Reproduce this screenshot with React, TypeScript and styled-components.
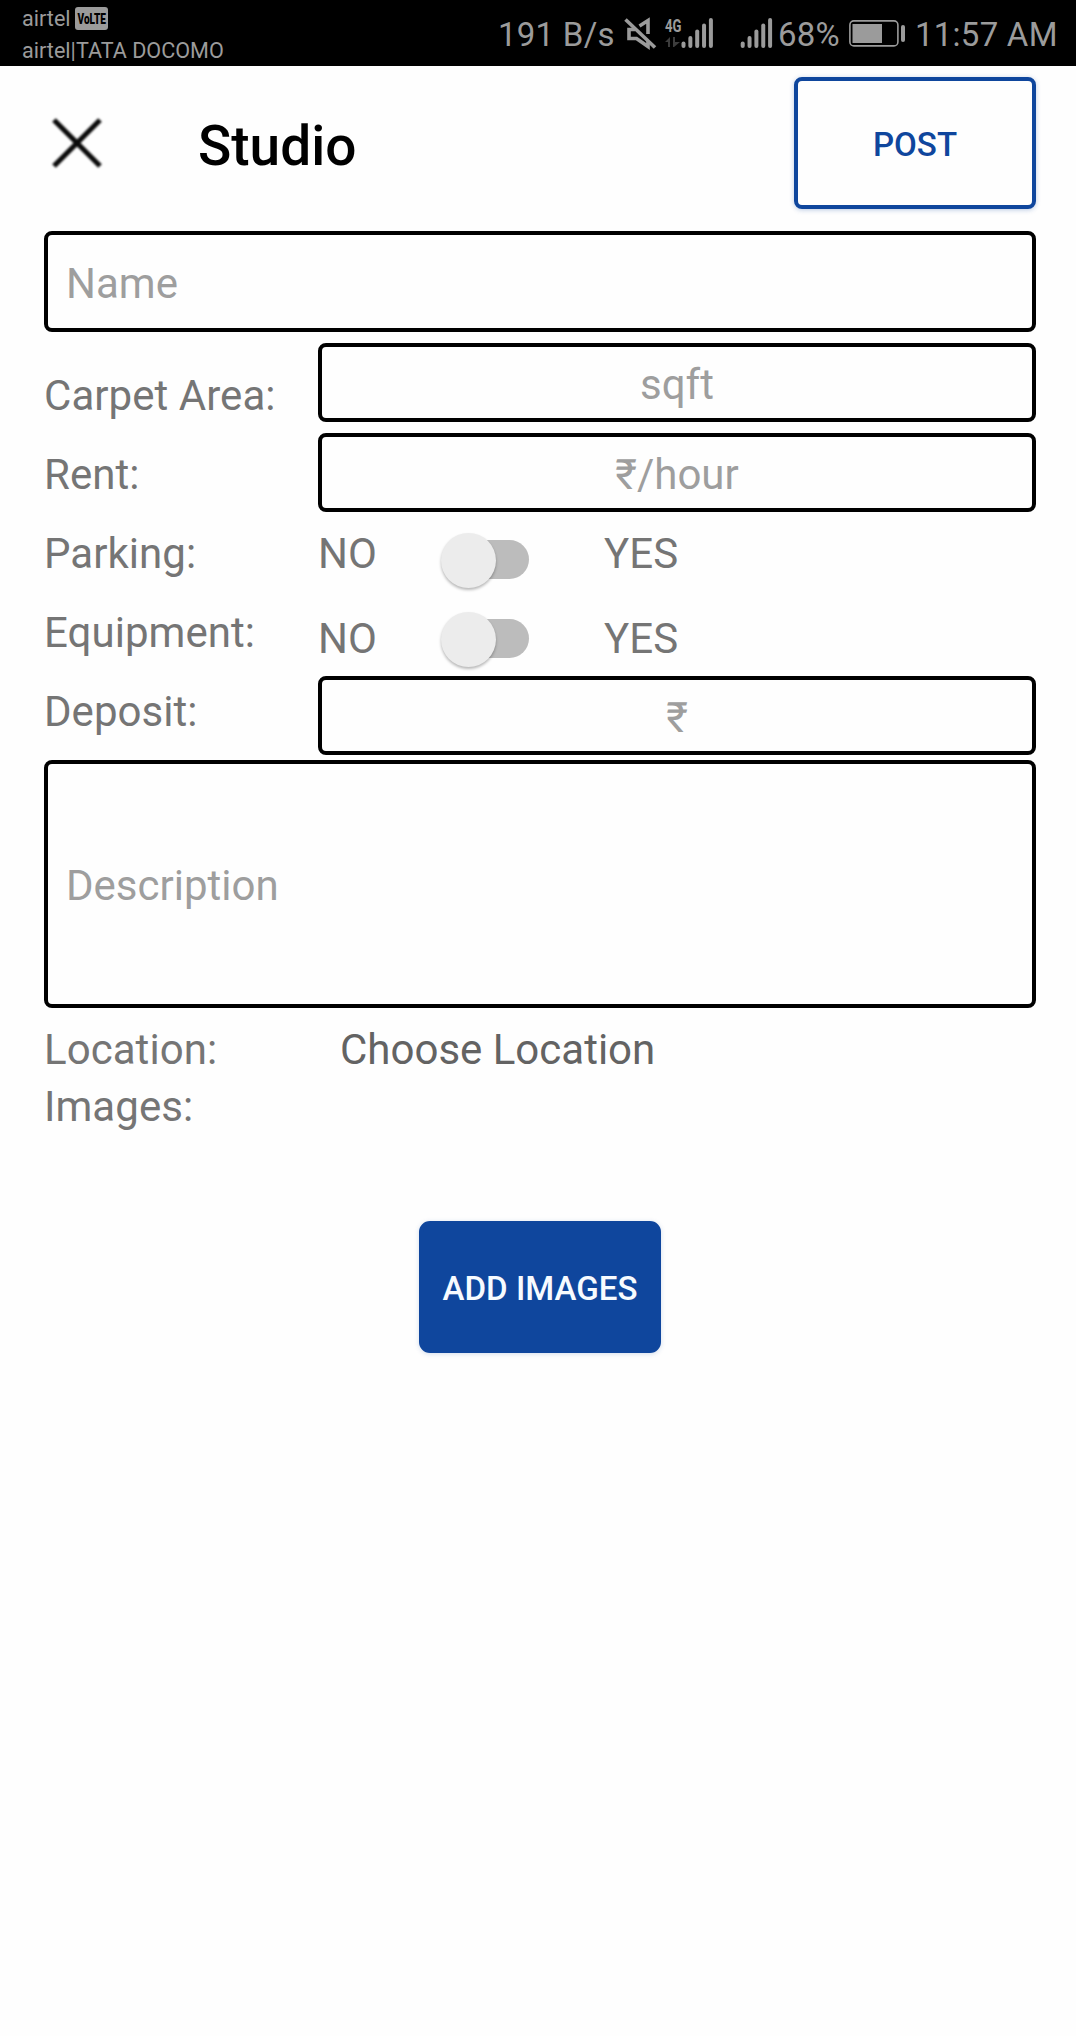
import React, { useState } from "react";
import styled, { createGlobalStyle } from "styled-components";

const ink = "#9b9b9b";
const blue = "#0f469d";

const GlobalStyle = createGlobalStyle`
  * { box-sizing: border-box; }
  body { margin: 0; background: #fefefe; font-family: Roboto, "Noto Sans", sans-serif; }
`;

const Screen = styled.div`
  width: 1076px;
  min-height: 2036px;
  background: #fefefe;
  overflow: hidden;
`;

const StatusBar = styled.header`
  display: flex;
  align-items: flex-start;
  justify-content: space-between;
  height: 66px;
  padding: 0 18px 0 22px;
  background: #000;
  color: ${ink};
`;

const Carriers = styled.div`
  display: flex;
  flex-direction: column;
  padding-top: 3px;
  font-size: 21.6px;
  line-height: 32px;
`;

const CarrierLine = styled.div`
  display: flex;
  align-items: center;
  height: 32px;
  white-space: nowrap;
`;

const VolteBadge = styled.span`
  flex: none;
  width: 33px;
  height: 23px;
  margin: 0 0 1px 4px;
  border-radius: 3px;
  background: ${ink};
`;

const SystemIcons = styled.div`
  display: flex;
  align-items: flex-start;
  height: 66px;
`;

const StatusText = styled.span<{ $width: number }>`
  width: ${(p) => p.$width}px;
  padding-top: 15px;
  font-size: 33px;
  line-height: 40px;
  letter-spacing: 0.25px;
  white-space: nowrap;
`;

const Glyph = styled.svg`
  display: block;
  flex: none;
  overflow: visible;
`;

const TitleBar = styled.div`
  display: flex;
  height: 165px;
  padding: 11px 40px 0 44px;
`;

const CloseButton = styled.button`
  width: 66px;
  height: 66px;
  margin-top: 33px;
  padding: 0;
  border: 0;
  background: none;
`;

const CloseGlyph = styled(Glyph)`
  filter: blur(0.8px);
`;

const Title = styled.h1`
  flex: 1;
  margin: 37px 0 0 88px;
  font-size: 55px;
  font-weight: 500;
  line-height: 64px;
  color: #000;
`;

const ActionButton = styled.button<{ $filled?: boolean }>`
  width: 242px;
  height: 132px;
  padding: 4px 0 0;
  border: 4px solid ${blue};
  border-radius: ${(p) => (p.$filled ? 11 : 8)}px;
  background: ${(p) => (p.$filled ? blue : "#fefefe")};
  color: ${(p) => (p.$filled ? "#f7fbff" : blue)};
  box-shadow: 0 1px 5px rgba(15, 70, 157, ${(p) => (p.$filled ? 0.18 : 0.28)});
  font: 500 33.1px/40px Roboto, sans-serif;
  white-space: nowrap;
`;

const Form = styled.form`
  display: flex;
  flex-direction: column;
  padding: 0 40px 0 44px;
`;

const Field = styled.input<{ $height: number; $centered?: boolean; $drop?: number }>`
  width: 100%;
  height: ${(p) => p.$height}px;
  padding: ${(p) => p.$drop ?? 4}px 18px 0;
  border: 4px solid #000;
  border-radius: 8px;
  outline: 0;
  background: transparent;
  color: #000;
  font: 42px/49px Roboto, "Noto Sans", sans-serif;
  text-align: ${(p) => (p.$centered ? "center" : "left")};
  &::placeholder { color: #9e9e9e; opacity: 1; }
`;

const Details = styled.div`
  display: grid;
  grid-template-columns: 274px 1fr;
  height: 417px;
  margin-top: 11px;
`;

const Labels = styled.div`
  display: flex;
  flex-direction: column;
  gap: 30px;
  padding-top: 28px;
`;

const Label = styled.span<{ $dark?: boolean }>`
  font-size: 42px;
  line-height: 49px;
  letter-spacing: ${(p) => (p.$dark ? 0 : 0.05)}px;
  color: ${(p) => (p.$dark ? "#636363" : "#757575")};
  white-space: nowrap;
`;

const Controls = styled.div`
  display: flex;
  flex-direction: column;
`;

const RentField = styled.div`
  margin-top: 11px;
`;

const ToggleRow = styled.div<{ $top: number }>`
  display: grid;
  grid-template-columns: 123px 163px 1fr;
  height: 49px;
  margin-top: ${(p) => p.$top}px;
`;

const DepositField = styled.div`
  margin-top: 13px;
`;

const Switch = styled.button<{ $drop: number }>`
  display: flex;
  align-items: center;
  width: 90px;
  height: 55px;
  margin-top: ${(p) => p.$drop}px;
  padding: 0;
  border: 0;
  background: none;
`;

const Track = styled.span<{ $on: boolean }>`
  display: flex;
  align-items: center;
  justify-content: ${(p) => (p.$on ? "flex-end" : "flex-start")};
  width: 78px;
  height: 39px;
  margin-left: 10px;
  border-radius: 20px;
  background: ${(p) => (p.$on ? "#8fabd6" : "#bcbcbc")};
`;

const Thumb = styled.span`
  flex: none;
  width: 55px;
  height: 55px;
  margin: 1px -10px 0;
  border-radius: 50%;
  background: #ececec;
  box-shadow: 0 2px 3px rgba(0, 0, 0, 0.28);
`;

const InfoRow = styled.div<{ $top: number }>`
  display: grid;
  grid-template-columns: 296px 1fr;
  margin-top: ${(p) => p.$top}px;
`;

const Upload = styled.div`
  display: flex;
  justify-content: center;
  padding-top: 90px;
`;

function SignalBars({ width, start }: { width: number; start: number }) {
  return (
    <Glyph width={width} height="66" viewBox={`0 0 ${width} 66`} stroke={ink} strokeWidth="4" strokeLinecap="round">
      {[43.5, 38, 31.5, 25.5, 20].map((top, i) => (
        <path key={top} d={`M${start + i * 6.85} ${top}V46`} />
      ))}
    </Glyph>
  );
}

function MuteIcon() {
  return (
    <Glyph width="36" height="66" viewBox="0 0 36 66" fill="none" stroke={ink} strokeWidth="3.6">
      <path d="M1.5 19.5L31 47.5" />
      <path d="M15.5 26L24 20.5V34" />
      <path d="M11 29.5H5V38.5H12.5L24 46.5V41" />
    </Glyph>
  );
}

function NetworkType() {
  return (
    <Glyph width="22" height="66" viewBox="-5 0 22 66" fill={ink}>
      <text x="0" y="31.5" fontFamily="Roboto" fontWeight="700" fontSize="18.5" textLength="16.5" lengthAdjust="spacingAndGlyphs">4G</text>
      <path d="M0 42L5 37V47H3V42ZM8 37H10V42H15L9 47H8Z" fill="#3c3c3c" />
    </Glyph>
  );
}

function BatteryIcon() {
  return (
    <Glyph width="66" height="66" viewBox="0 0 66 66" fill="none">
      <rect x="0.9" y="20.9" width="48" height="25" rx="4" stroke={ink} strokeWidth="1.6" />
      <rect x="3.5" y="24" width="29.5" height="19" fill={ink} />
      <rect x="52" y="25" width="4" height="17" rx="2" fill={ink} />
    </Glyph>
  );
}

function VolteMark() {
  return (
    <VolteBadge>
      <Glyph width="33" height="23" viewBox="0 0 33 23">
        <text x="2.5" y="17" fontFamily="Roboto" fontWeight="900" fontSize="15.5" textLength="28.5" lengthAdjust="spacingAndGlyphs">VoLTE</text>
      </Glyph>
    </VolteBadge>
  );
}

function Toggle({ drop }: { drop: number }) {
  const [on, setOn] = useState(false);
  return (
    <Switch type="button" role="switch" aria-checked={on} $drop={drop} onClick={() => setOn(!on)}>
      <Track $on={on}><Thumb /></Track>
    </Switch>
  );
}

export default function App() {
  return (
    <Screen>
      <GlobalStyle />
      <StatusBar>
        <Carriers>
          <CarrierLine>airtel<VolteMark /></CarrierLine>
          <CarrierLine>airtel|TATA DOCOMO</CarrierLine>
        </Carriers>
        <SystemIcons>
          <StatusText $width={126}>191 B/s</StatusText>
          <MuteIcon />
          <NetworkType />
          <SignalBars width={58} start={1.5} />
          <SignalBars width={38} start={2.7} />
          <StatusText $width={71}>68%</StatusText>
          <BatteryIcon />
          <StatusText $width={143}>11:57 AM</StatusText>
        </SystemIcons>
      </StatusBar>
      <TitleBar>
        <CloseButton aria-label="Close">
          <CloseGlyph width="66" height="66" viewBox="0 0 66 66" stroke="#0a0a0a" strokeWidth="5.2">
            <path d="M10 10L56 56M56 10L10 56" />
          </CloseGlyph>
        </CloseButton>
        <Title>Studio</Title>
        <ActionButton>POST</ActionButton>
      </TitleBar>
      <Form>
        <Field $height={101} placeholder="Name" />
        <Details>
          <Labels>
            <Label>Carpet Area:</Label>
            <Label>Rent:</Label>
            <Label>Parking:</Label>
            <Label>Equipment:</Label>
            <Label>Deposit:</Label>
          </Labels>
          <Controls>
            <Field $height={79} $centered placeholder="sqft" />
            <RentField><Field $height={79} $centered placeholder="₹/hour" /></RentField>
            <ToggleRow $top={17}>
              <Label>NO</Label><Toggle drop={3} /><Label>YES</Label>
            </ToggleRow>
            <ToggleRow $top={36}>
              <Label>NO</Label><Toggle drop={-3} /><Label>YES</Label>
            </ToggleRow>
            <DepositField><Field $height={79} $centered placeholder="₹" /></DepositField>
          </Controls>
        </Details>
        <Field $height={248} $drop={2} placeholder="Description" />
        <InfoRow $top={17}><Label>Location:</Label><Label $dark>Choose Location</Label></InfoRow>
        <InfoRow $top={8}><Label>Images:</Label></InfoRow>
        <Upload><ActionButton type="button" $filled>ADD IMAGES</ActionButton></Upload>
      </Form>
    </Screen>
  );
}
